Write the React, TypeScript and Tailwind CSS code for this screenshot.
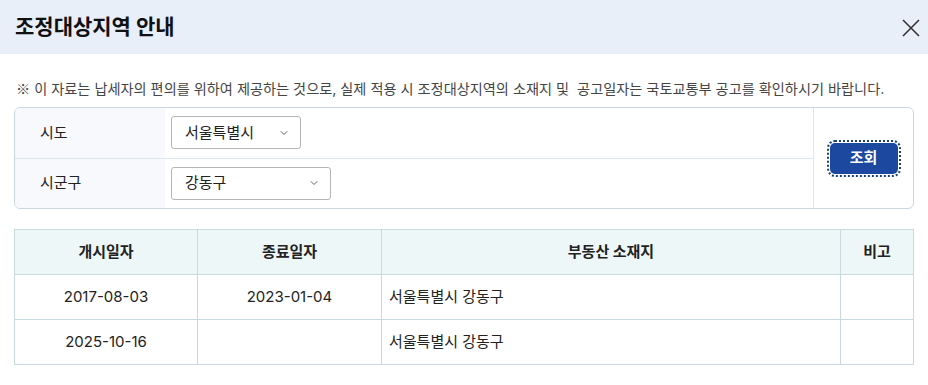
import { ChevronDown } from "lucide-react";

const rows = [
  { start: "2017-08-03", end: "2023-01-04", addr: "서울특별시 강동구", note: "" },
  { start: "2025-10-16", end: "", addr: "서울특별시 강동구", note: "" },
];

function SelectBox({ value, width }: { value: string; width: string }) {
  return (
    <div
      className={`flex h-[33px] items-center justify-between rounded-[3px] border border-[#b5b5b5] bg-white pl-[13px] pr-[10px] text-[15px] text-[#222] ${width}`}
    >
      <span>{value}</span>
      <ChevronDown className="size-3 text-[#666]" strokeWidth={2} />
    </div>
  );
}

export default function App() {
  return (
    <div
      className="h-[385px] w-[928px] overflow-hidden bg-white text-[#222]"
      style={{ fontFamily: 'Inter, "Noto Sans CJK KR", "Noto Sans", sans-serif' }}
    >
      <header className="flex h-[54px] items-center justify-between bg-[#e9eff8] pl-[15px] pr-[8px]">
        <h1 className="text-[21px] font-bold text-[#111]">조정대상지역 안내</h1>
        <svg width="18" height="18" viewBox="0 0 18 18" className="mt-[2px]">
          <path d="M1 1L17 17M17 1L1 17" stroke="#333" strokeWidth="1.6" fill="none" />
        </svg>
      </header>

      <div className="px-[14px] pt-[24px]">
        <p className="pl-[2px] text-[14.2px] leading-[20px] text-[#444]">
          <span style={{ fontFamily: '"Noto Sans CJK KR", sans-serif' }}>※</span> 이
          자료는 납세자의 편의를 위하여 제공하는 것으로, 실제 적용 시
          조정대상지역의 소재지 및&nbsp; 공고일자는 국토교통부 공고를 확인하시기
          바랍니다.
        </p>

        <div className="mt-[8px] flex h-[102px] overflow-hidden rounded-[6px] border border-[#c9d7e2]">
          <div className="flex flex-1 flex-col">
            <div className="flex flex-1 border-b border-[#dfe7ee]">
              <div className="flex w-[150px] items-center bg-[#f7f9fc] pl-[25px] text-[15px]">
                시도
              </div>
              <div className="flex items-center pl-[6px]">
                <SelectBox value="서울특별시" width="w-[130px]" />
              </div>
            </div>
            <div className="flex flex-1">
              <div className="flex w-[150px] items-center bg-[#f7f9fc] pl-[25px] text-[15px]">
                시군구
              </div>
              <div className="flex items-center pl-[6px]">
                <SelectBox value="강동구" width="w-[160px]" />
              </div>
            </div>
          </div>
          <div className="flex w-[100px] items-center justify-center border-l border-[#dfe7ee]">
            <button className="h-[31px] w-[68px] rounded-[5px] bg-[#1c48a0] text-[15px] font-bold text-white outline-2 outline-offset-1 outline-dotted outline-[#1c3f7a]">
              조회
            </button>
          </div>
        </div>

        <table className="mt-[20px] w-full border-collapse text-[15px]">
          <thead>
            <tr className="h-[45px] bg-[#eef7f7]">
              <th className="w-[183px] border border-[#c7dade] font-bold">개시일자</th>
              <th className="w-[184px] border border-[#c7dade] font-bold">종료일자</th>
              <th className="border border-[#c7dade] font-bold">부동산 소재지</th>
              <th className="w-[73px] border border-[#c7dade] font-bold">비고</th>
            </tr>
          </thead>
          <tbody>
            {rows.map((r) => (
              <tr key={r.start} className="h-[45px]">
                <td className="border border-[#c7dade] text-center">{r.start}</td>
                <td className="border border-[#c7dade] text-center">{r.end}</td>
                <td className="border border-[#c7dade] pl-[7px]">{r.addr}</td>
                <td className="border border-[#c7dade]">{r.note}</td>
              </tr>
            ))}
          </tbody>
        </table>
      </div>
    </div>
  );
}
